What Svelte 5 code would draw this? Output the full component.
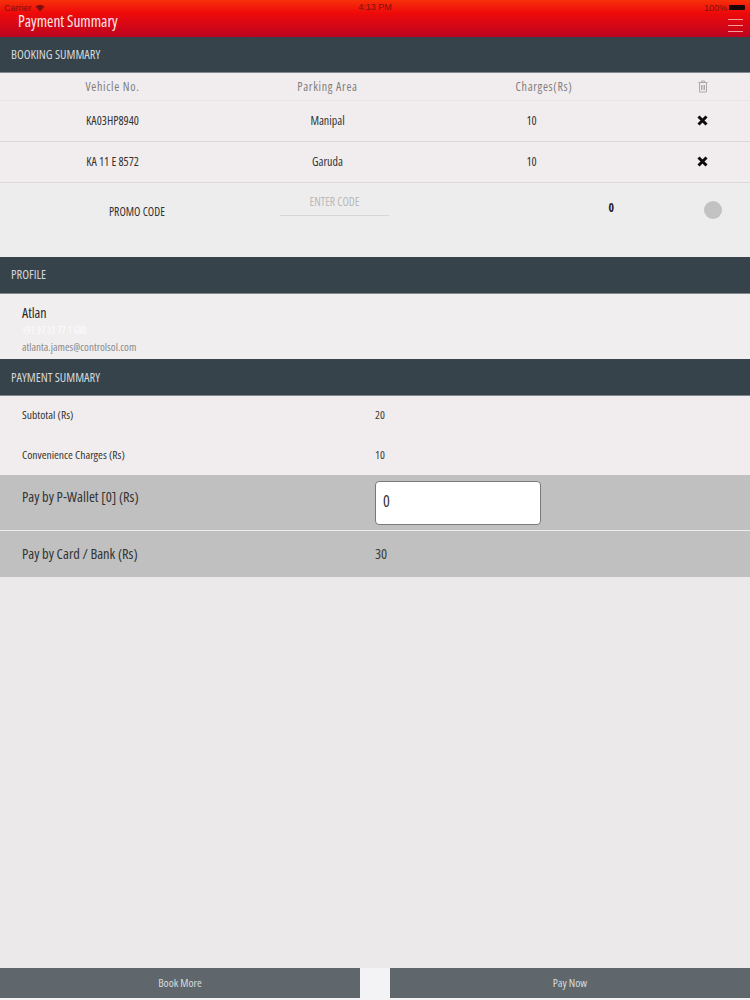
<script>
  const bookings = [
    { vehicle: 'KA03HP8940', area: 'Manipal', charge: 10 },
    { vehicle: 'KA 11 E 8572', area: 'Garuda', charge: 10 }
  ]
</script>

<div class="page">
  <header class="topbar">
    <div class="status">
      <span class="carrier">
        Carrier
        <svg width="10" height="8" viewBox="0 0 10 8"><path d="M5 7.5 L0.5 2.6 C3 0.3 7 0.3 9.5 2.6 Z" fill="#7a1010" /></svg>
      </span>
      <span class="clock">4:13 PM</span>
      <span class="battery">100% <i></i></span>
    </div>
    <div class="title-row">
      <span class="title">Payment Summary</span>
      <span class="burger"><i></i><i></i><i></i></span>
    </div>
  </header>

  <div class="bar first">BOOKING SUMMARY</div>
  <div class="grid head">
    <span>Vehicle No.</span>
    <span>Parking Area</span>
    <span class="head-charge">Charges(Rs)</span>
    <span class="icon">
      <svg width="10" height="13" viewBox="0 0 10 13" fill="none" stroke="#a9a9a9" stroke-width="1">
        <path d="M0.5 2.5 H9.5 M3.5 2.5 V1 H6.5 V2.5" />
        <path d="M1.5 2.5 V12 H8.5 V2.5 M3.5 5 V10 M5 5 V10 M6.5 5 V10" />
      </svg>
    </span>
  </div>
  {#each bookings as b}
    <div class="grid row">
      <span>{b.vehicle}</span>
      <span>{b.area}</span>
      <span class="charge">{b.charge}</span>
      <span class="icon">
        <svg width="11" height="11" viewBox="0 0 11 11"><path d="M1.5 1.5 L9.5 9.5 M9.5 1.5 L1.5 9.5" stroke="#0c0c0c" stroke-width="3" /></svg>
      </span>
    </div>
  {/each}
  <div class="promo">
    <span class="promo-label">PROMO CODE</span>
    <span class="promo-input">ENTER CODE</span>
    <span class="promo-value">0</span>
    <span class="dot"></span>
  </div>

  <div class="bar">PROFILE</div>
  <div class="profile">
    <div class="name">Atlan</div>
    <div class="phone">+91 97 31 77 1 680</div>
    <div class="email">atlanta.james@controlsol.com</div>
  </div>

  <div class="bar pay-head">PAYMENT SUMMARY</div>
  <div class="summary">
    <div class="line"><span>Subtotal (Rs)</span><span class="amt">20</span></div>
    <div class="line"><span>Convenience Charges (Rs)</span><span class="amt">10</span></div>
  </div>
  <div class="pay wallet">
    <span class="pay-label">Pay by P-Wallet [0] (Rs)</span>
    <div class="pay-input">0</div>
  </div>
  <div class="pay card">
    <span>Pay by Card / Bank (Rs)</span>
    <span class="amt">30</span>
  </div>

  <div class="spacer"></div>

  <footer class="actions">
    <div class="btn">Book More</div>
    <div class="btn">Pay Now</div>
  </footer>
</div>

<style>
  :global(body) {
    margin: 0;
  }
  .page {
    width: 750px;
    height: 1000px;
    display: flex;
    flex-direction: column;
    background: #ebe9ea;
    font-family: "Open Sans", sans-serif;
    font-stretch: 75%;
    color: #333;
    overflow: hidden;
  }
  .topbar {
    height: 37px;
    box-sizing: border-box;
    background: linear-gradient(#f7300a 0%, #ee0a0a 35%, #bd0420 100%);
  }
  .status {
    height: 13px;
    padding: 1px 4px 0;
    display: grid;
    grid-template-columns: 1fr auto 1fr;
    font-size: 9px;
    line-height: 12px;
    color: #7c1212;
    font-family: "Liberation Sans", sans-serif;
  }
  .carrier {
    display: flex;
    gap: 3px;
    align-items: center;
  }
  .battery {
    display: flex;
    justify-content: flex-end;
    align-items: center;
    gap: 2px;
    padding-right: 1px;
  }
  .battery i {
    width: 16px;
    height: 5px;
    background: #1a0606;
    border-radius: 1px;
  }
  .title-row {
    display: flex;
    justify-content: space-between;
    align-items: flex-start;
    padding: 0 7px 0 18px;
    height: 20px;
  }
  .title {
    color: #fbe6e6;
    font-size: 15.4px;
    line-height: 15px;
  }
  .burger {
    display: flex;
    flex-direction: column;
    gap: 5px;
    width: 15px;
    margin-top: 5px;
  }
  .burger i {
    height: 1px;
    background: #f79a9a;
  }
  .bar {
    height: 37px;
    flex: none;
    box-sizing: border-box;
    padding-left: 11px;
    line-height: 36px;
    font-size: 12.5px;
    color: #d5d9da;
    background: #36434b;
    border-bottom: 1px solid #7f888e;
  }
  .bar.first {
    height: 36px;
    line-height: 35px;
  }
  .bar.pay-head {
    line-height: 37px;
  }
  .grid {
    display: grid;
    grid-template-columns: 225px 205px 225px 95px;
    text-align: center;
    align-items: center;
    font-size: 12px;
    background: #f1edee;
    box-sizing: border-box;
  }
  .grid span {
    display: block;
  }
  .head {
    height: 28px;
    color: #7e7e7e;
    letter-spacing: 0.7px;
    border-bottom: 1px solid #e9e5e6;
  }
  .head-charge {
    padding-left: 3px;
  }
  .row {
    height: 41px;
    color: #333;
    border-bottom: 1px solid #dcd8d9;
    padding-bottom: 2px;
  }
  .charge {
    padding-right: 22px;
  }
  .icon {
    line-height: 0;
  }
  .promo {
    height: 74px;
    flex: none;
    display: grid;
    grid-template-columns: 280px 109px 222px 1fr;
    align-items: start;
    background: #eeedee;
    font-size: 11.7px;
    box-sizing: border-box;
  }
  .promo-label {
    padding-top: 20px;
    padding-left: 109px;
  }
  .promo-input {
    height: 33px;
    box-sizing: border-box;
    text-align: center;
    padding-top: 10px;
    color: #b9b9b9;
    border-bottom: 1px solid #d6d6d6;
  }
  .promo-value {
    padding-top: 16px;
    text-align: right;
    font-weight: 700;
    color: #222;
    margin-right: -3px;
  }
  .dot {
    width: 18px;
    height: 18px;
    margin: 18px 0 0 93px;
    border-radius: 50%;
    background: #c2c2c2;
  }
  .profile {
    height: 65px;
    flex: none;
    box-sizing: border-box;
    padding: 11px 0 0 22px;
    background: #f1eeef;
  }
  .name {
    font-size: 14px;
    line-height: 16px;
    color: #2c2c2c;
  }
  .phone {
    font-size: 10px;
    line-height: 18px;
    color: #fcfcfc;
  }
  .email {
    font-size: 11px;
    line-height: 15px;
    color: #8a8a8a;
  }
  .summary {
    height: 79px;
    flex: none;
    background: #f1edee;
    display: flex;
    flex-direction: column;
    gap: 2px;
  }
  .line {
    display: grid;
    grid-template-columns: 353px 1fr;
    padding-left: 22px;
    height: 36px;
    padding-bottom: 2px;
    align-items: center;
    font-size: 11.6px;
  }
  .amt {
    color: #3a3a3a;
  }
  .pay {
    display: grid;
    grid-template-columns: 353px 1fr;
    flex: none;
    padding-left: 22px;
    background: #c0c0c0;
    font-size: 14.4px;
    color: #333;
  }
  .wallet {
    height: 56px;
    border-bottom: 1px solid #ececec;
    box-sizing: border-box;
    padding-top: 6px;
  }
  .pay-label {
    padding-top: 6px;
  }
  .pay-input {
    width: 166px;
    height: 44px;
    box-sizing: border-box;
    padding-left: 7px;
    line-height: 38px;
    background: #fff;
    border: 1px solid #77797b;
    border-radius: 4px;
    font-size: 16px;
    color: #333;
  }
  .card {
    height: 44px;
    padding-bottom: 2px;
    align-items: center;
  }
  .spacer {
    flex: 1;
  }
  .actions {
    height: 32px;
    flex: none;
    display: flex;
    justify-content: space-between;
    align-items: flex-start;
    background: #f3f3f5;
  }
  .btn {
    width: 360px;
    height: 30px;
    line-height: 30px;
    text-align: center;
    font-size: 11.5px;
    color: #d8dcdc;
    background: #5f676c;
  }
</style>
